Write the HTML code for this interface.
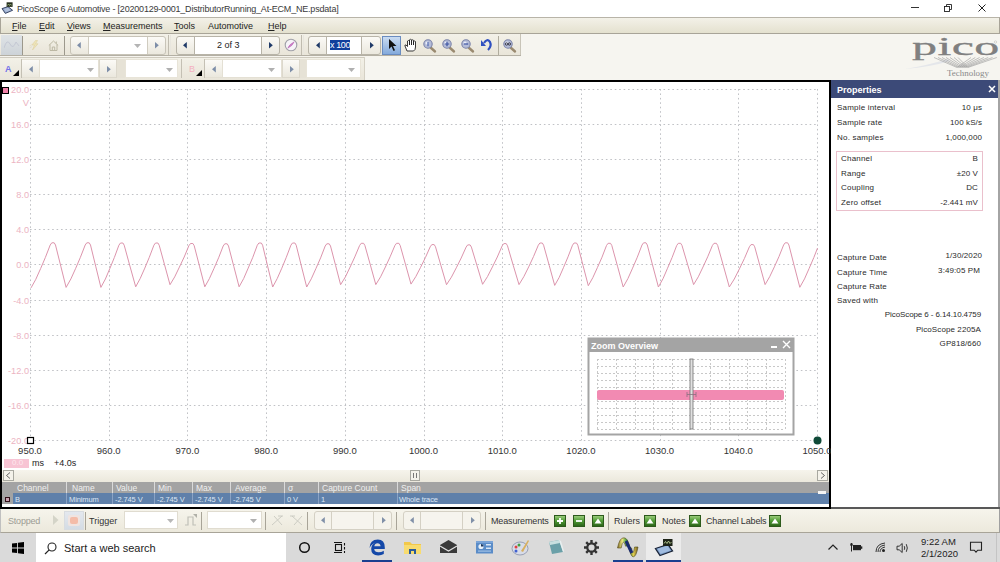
<!DOCTYPE html>
<html><head><meta charset="utf-8">
<style>
*{margin:0;padding:0;box-sizing:border-box}
html,body{width:1000px;height:562px;overflow:hidden;background:#fff;font-family:"Liberation Sans",sans-serif;position:relative}
.a{position:absolute}
.t{position:absolute;white-space:nowrap;line-height:1}
svg{display:block}
</style></head><body>
<div class="a" style="left:0px;top:0px;width:1000px;height:17px;background:#fff"></div>
<svg class="a" style="left:0px;top:0px;" width="16" height="16" viewBox="0 0 16 16"><path d="M2 8.6L8 6.6L12.6 10.3L5.3 13.4Z" fill="#90a4c8" stroke="#2e3a58" stroke-width="0.9" stroke-linejoin="round"/><path d="M4 9L8 7.8L10.8 10.2L5.8 12Z" fill="#b0c0dc"/><rect x="6.6" y="2.3" width="6" height="4.6" fill="#283020"/><path d="M7.5 5.5L8.5 4L9.5 5.5L10.5 4L11.5 5.5" stroke="#a0c080" stroke-width="0.7" fill="none"/></svg>
<div class="t" style="left:17px;top:5px;font-size:9px;color:#3a3a3a;letter-spacing:-0.2px">PicoScope 6 Automotive - [20200129-0001_DistributorRunning_At-ECM_NE.psdata]</div>
<div class="a" style="left:911px;top:7px;width:8px;height:1px;background:#333"></div>
<svg class="a" style="left:943px;top:4px;" width="9" height="8" viewBox="0 0 9 8"><rect x="1.5" y="2.5" width="5" height="5" fill="none" stroke="#222" stroke-width="0.9"/><path d="M3.5 2.5V0.5H8.5V5.5H6.5" fill="none" stroke="#222" stroke-width="0.9"/></svg>
<svg class="a" style="left:978px;top:4px;" width="8" height="8" viewBox="0 0 8 8"><path d="M0.5 0.5L7.5 7.5M7.5 0.5L0.5 7.5" stroke="#222" stroke-width="1"/></svg>
<div class="a" style="left:0px;top:17px;width:1000px;height:17px;background:linear-gradient(#f3f1e8,#e4e1cf);border-top:1px solid #b8b4a8;border-bottom:1px solid #a8a498;border-left:1px solid #a8a498;border-right:1px solid #a8a498"></div>
<div class="t" style="left:12px;top:22px;font-size:9px;color:#222;"><u style="text-decoration:underline;text-decoration-thickness:1px;text-underline-offset:1px">F</u>ile</div>
<div class="t" style="left:39px;top:22px;font-size:9px;color:#222;"><u style="text-decoration:underline;text-decoration-thickness:1px;text-underline-offset:1px">E</u>dit</div>
<div class="t" style="left:67px;top:22px;font-size:9px;color:#222;"><u style="text-decoration:underline;text-decoration-thickness:1px;text-underline-offset:1px">V</u>iews</div>
<div class="t" style="left:103px;top:22px;font-size:9px;color:#222;"><u style="text-decoration:underline;text-decoration-thickness:1px;text-underline-offset:1px">M</u>easurements</div>
<div class="t" style="left:174px;top:22px;font-size:9px;color:#222;"><u style="text-decoration:underline;text-decoration-thickness:1px;text-underline-offset:1px">T</u>ools</div>
<div class="t" style="left:208px;top:22px;font-size:9px;color:#222;">Automotive</div>
<div class="t" style="left:268px;top:22px;font-size:9px;color:#222;"><u style="text-decoration:underline;text-decoration-thickness:1px;text-underline-offset:1px">H</u>elp</div>
<div class="a" style="left:0px;top:34px;width:1000px;height:46px;background:#f6f5f0"></div>
<div class="a" style="left:0px;top:34px;width:521px;height:21px;background:linear-gradient(#f3f1e8,#e9e5d9);border-right:1px solid #c8c4b8"></div>
<div class="a" style="left:0px;top:57px;width:365px;height:23px;background:linear-gradient(#f3f1e8,#e9e5d9);border-right:1px solid #c8c4b8"></div>
<div class="a" style="left:1px;top:35px;width:21px;height:20px;background:linear-gradient(#dfe3e6,#cdd3d8)"></div>
<svg class="a" style="left:4px;top:40px;" width="16" height="10" viewBox="0 0 16 10"><path d="M0 8 Q3 -2 6 4 T12 2 L15 6" fill="none" stroke="#c4c8d4" stroke-width="1"/></svg>
<div class="a" style="left:22px;top:36px;width:1px;height:19px;background:#9c988c"></div>
<svg class="a" style="left:29px;top:40px;" width="11" height="11" viewBox="0 0 11 11"><path d="M6.5 0.5 L3 5 L5.5 5 L3.5 10 L9 3.8 L6.5 3.8 L8.5 0.5Z" fill="#eee4b8" stroke="#ddd0a0" stroke-width="0.6"/><path d="M0.5 6L3 4.5M0.5 8L3 6.5" stroke="#e0dcc8" stroke-width="0.8"/></svg>
<svg class="a" style="left:48px;top:40px;" width="11" height="11" viewBox="0 0 11 11"><path d="M0.8 5.5 L5.5 1 L10.2 5.5 M2 4.5 V10.5 H9 V4.5 M4.3 10.5V7H6.7V10.5 M8.3 1.5V3.5" fill="none" stroke="#bcb8a4" stroke-width="1"/></svg>
<div class="a" style="left:64px;top:36px;width:1px;height:19px;background:#9c988c"></div>
<div class="a" style="left:70px;top:36px;width:96px;height:19px;border:1px solid #c8c4b8;border-radius:3px;background:linear-gradient(#fbfaf6,#ebe8de)"></div>
<div class="a" style="left:88px;top:37px;width:60px;height:17px;background:#fff;border-left:1px solid #d0ccc0;border-right:1px solid #d0ccc0"></div>
<svg class="a" style="left:76.5px;top:42px;" width="4" height="6.5" viewBox="0 0 4 6.5"><path d="M3.8 0L0 3.25L3.8 6.5Z" fill="#7d8ea8"/></svg>
<svg class="a" style="left:155.0px;top:42px;" width="4" height="6.5" viewBox="0 0 4 6.5"><path d="M0 0L3.8 3.25L0 6.5Z" fill="#7d8ea8"/></svg>
<svg class="a" style="left:134.0px;top:43.5px;" width="7" height="4" viewBox="0 0 7 4"><path d="M0 0L7 0L3.5 4Z" fill="#b4b4b4"/></svg>
<div class="a" style="left:168px;top:35px;width:1px;height:21px;background:#c0bcb0"></div>
<div class="a" style="left:170px;top:35px;width:1px;height:21px;background:#e8e6de"></div>
<div class="a" style="left:176px;top:36px;width:104px;height:19px;border:1px solid #b8b4a8;border-radius:3px;background:linear-gradient(#fbfaf6,#ebe8de)"></div>
<div class="a" style="left:194px;top:37px;width:68px;height:17px;background:#fff;border-left:1px solid #b8b4a8;border-right:1px solid #b8b4a8"></div>
<svg class="a" style="left:182.5px;top:42px;" width="4" height="6.5" viewBox="0 0 4 6.5"><path d="M3.8 0L0 3.25L3.8 6.5Z" fill="#1f3a68"/></svg>
<svg class="a" style="left:268.5px;top:42px;" width="4" height="6.5" viewBox="0 0 4 6.5"><path d="M0 0L3.8 3.25L0 6.5Z" fill="#1f3a68"/></svg>
<div class="t" style="left:217px;top:41px;font-size:9px;color:#222;">2 of 3</div>
<svg class="a" style="left:284px;top:38px;" width="14" height="14" viewBox="0 0 14 14"><circle cx="7" cy="7" r="5.8" fill="#f6f4f8" stroke="#a0a0a8" stroke-width="1.1"/><path d="M10.2 3.8 Q9 7.5 3.8 10.2 Q5 6.5 10.2 3.8Z" fill="#d080c8" stroke="#b060b0" stroke-width="0.5"/></svg>
<div class="a" style="left:301px;top:35px;width:1px;height:21px;background:#c0bcb0"></div>
<div class="a" style="left:303px;top:35px;width:1px;height:21px;background:#e8e6de"></div>
<div class="a" style="left:308px;top:36px;width:73px;height:19px;border:1px solid #b8b4a8;border-radius:3px;background:linear-gradient(#fbfaf6,#ebe8de)"></div>
<div class="a" style="left:326px;top:37px;width:36px;height:17px;background:#fff;border-left:1px solid #b8b4a8;border-right:1px solid #b8b4a8"></div>
<svg class="a" style="left:316.0px;top:42px;" width="4" height="6.5" viewBox="0 0 4 6.5"><path d="M3.8 0L0 3.25L3.8 6.5Z" fill="#1f3a68"/></svg>
<svg class="a" style="left:370.0px;top:42px;" width="4" height="6.5" viewBox="0 0 4 6.5"><path d="M0 0L3.8 3.25L0 6.5Z" fill="#1f3a68"/></svg>
<div class="a" style="left:330px;top:40px;width:20px;height:10px;background:#10409c"></div>
<div class="t" style="left:330px;top:41px;font-size:9px;color:#fff;letter-spacing:-0.4px">x 100</div>
<div class="a" style="left:382px;top:36px;width:19px;height:19px;background:linear-gradient(#cadcf2,#84aadc);border:1px solid #6a8cc0"></div>
<svg class="a" style="left:388px;top:39px;" width="9" height="13" viewBox="0 0 9 13"><path d="M1 0 L1 10 L3.5 7.5 L5.5 12 L7 11.3 L5 7 L8.5 7 Z" fill="#111"/></svg>
<svg class="a" style="left:404px;top:38px;" width="14" height="14" viewBox="0 0 14 14"><path d="M3 13 L1 8 Q0.5 6.5 2 7 L3.5 8.5 V3 Q4.5 2 5.5 3 V7 V1.8 Q6.5 0.8 7.5 1.8 V7 V2.3 Q8.5 1.3 9.5 2.3 V7 V3.5 Q10.5 2.5 11.5 3.5 V9 Q11.5 12 9.5 13 Z" fill="#fff" stroke="#222" stroke-width="0.9"/></svg>
<svg class="a" style="left:0;top:0" width="1000" height="60"><path d="M430 47 L435 51.5" stroke="#9a8a70" stroke-width="2.4" stroke-linecap="round"/><circle cx="428" cy="44" r="4.2" fill="#b4bcd8" stroke="#7a82a8" stroke-width="1.1"/><circle cx="427" cy="43" r="1.6" fill="#e8ecf8"/><path d="M428 42V46.2" stroke="#5068b0" stroke-width="1.2"/><path d="M449 47 L454 51.5" stroke="#9a8a70" stroke-width="2.4" stroke-linecap="round"/><circle cx="447" cy="44" r="4.2" fill="#b4bcd8" stroke="#7a82a8" stroke-width="1.1"/><circle cx="446" cy="43" r="1.6" fill="#e8ecf8"/><path d="M444.8 44H449.2M447 41.8V46.2" stroke="#3850a0" stroke-width="1.2"/><path d="M468 47 L473 51.5" stroke="#9a8a70" stroke-width="2.4" stroke-linecap="round"/><circle cx="466" cy="44" r="4.2" fill="#b4bcd8" stroke="#7a82a8" stroke-width="1.1"/><circle cx="465" cy="43" r="1.6" fill="#e8ecf8"/><path d="M463.8 44H468.2" stroke="#3850a0" stroke-width="1.2"/><path d="M510 47 L515 51.5" stroke="#9a8a70" stroke-width="2.4" stroke-linecap="round"/><circle cx="508" cy="44" r="4.2" fill="#b4bcd8" stroke="#7a82a8" stroke-width="1.1"/><circle cx="507" cy="43" r="1.6" fill="#e8ecf8"/><circle cx="506.6" cy="44" r="1.2" fill="none" stroke="#303040" stroke-width="0.9"/><circle cx="509.4" cy="44" r="1.2" fill="none" stroke="#303040" stroke-width="0.9"/><path d="M484 43 Q487 38 490 42 Q492 46 488 50" fill="none" stroke="#3050c0" stroke-width="2.2"/><path d="M481 40 L486 46 L481 46Z" fill="#3050c0"/></svg>
<div class="a" style="left:498px;top:36px;width:1px;height:19px;background:#b0ac9e"></div>
<div class="a" style="left:0px;top:55px;width:521px;height:1px;background:#b4b0a4"></div>
<div class="a" style="left:0px;top:56px;width:521px;height:1px;background:#f6f4ee"></div>
<div class="a" style="left:0px;top:57px;width:365px;height:1px;background:#cfcbbf"></div>
<div class="t" style="left:5px;top:65px;font-size:9px;color:#7272e8;font-weight:bold">A</div>
<svg class="a" style="left:13px;top:70px;" width="6" height="6" viewBox="0 0 6 6"><path d="M6 0V6H0Z" fill="#000"/></svg>
<div class="a" style="left:21px;top:59px;width:1px;height:19px;background:#c4c0b4"></div>
<div class="a" style="left:22px;top:59px;width:17px;height:19px;background:linear-gradient(#fbfaf6,#ebe8de);border-top:1px solid #e4e0d4;border-bottom:1px solid #e4e0d4"></div>
<svg class="a" style="left:28.5px;top:66px;" width="4" height="6.5" viewBox="0 0 4 6.5"><path d="M3.8 0L0 3.25L3.8 6.5Z" fill="#7d8ea8"/></svg>
<div class="a" style="left:39px;top:59px;width:60px;height:19px;background:#fff;border:1px solid #e4e0d4"></div>
<svg class="a" style="left:86.5px;top:67.5px;" width="7" height="4" viewBox="0 0 7 4"><path d="M0 0L7 0L3.5 4Z" fill="#b0b0b0"/></svg>
<div class="a" style="left:99px;top:59px;width:18px;height:19px;background:linear-gradient(#fbfaf6,#ebe8de);border:1px solid #dcd8cc"></div>
<svg class="a" style="left:106.5px;top:66px;" width="4" height="6.5" viewBox="0 0 4 6.5"><path d="M0 0L3.8 3.25L0 6.5Z" fill="#7d8ea8"/></svg>
<div class="a" style="left:117px;top:59px;width:8px;height:19px;background:#e6e2d6"></div>
<div class="a" style="left:125px;top:59px;width:53px;height:19px;background:#fff;border:1px solid #e8e4d8"></div>
<svg class="a" style="left:165.5px;top:67.5px;" width="7" height="4" viewBox="0 0 7 4"><path d="M0 0L7 0L3.5 4Z" fill="#b0b0b0"/></svg>
<div class="a" style="left:181px;top:59px;width:1px;height:19px;background:#c4c0b4"></div>
<div class="t" style="left:189px;top:65px;font-size:9px;color:#f4b0c0;">B</div>
<svg class="a" style="left:196px;top:70px;" width="6" height="6" viewBox="0 0 6 6"><path d="M6 0V6H0Z" fill="#000"/></svg>
<div class="a" style="left:204px;top:59px;width:1px;height:19px;background:#c4c0b4"></div>
<div class="a" style="left:205px;top:59px;width:17px;height:19px;background:linear-gradient(#fbfaf6,#ebe8de);border-top:1px solid #e4e0d4;border-bottom:1px solid #e4e0d4"></div>
<svg class="a" style="left:211.5px;top:66px;" width="4" height="6.5" viewBox="0 0 4 6.5"><path d="M3.8 0L0 3.25L3.8 6.5Z" fill="#7d8ea8"/></svg>
<div class="a" style="left:222px;top:59px;width:60px;height:19px;background:#fff;border:1px solid #e4e0d4"></div>
<svg class="a" style="left:268.0px;top:67.5px;" width="7" height="4" viewBox="0 0 7 4"><path d="M0 0L7 0L3.5 4Z" fill="#b0b0b0"/></svg>
<div class="a" style="left:282px;top:59px;width:18px;height:19px;background:linear-gradient(#fbfaf6,#ebe8de);border:1px solid #dcd8cc"></div>
<svg class="a" style="left:289.5px;top:66px;" width="4" height="6.5" viewBox="0 0 4 6.5"><path d="M0 0L3.8 3.25L0 6.5Z" fill="#7d8ea8"/></svg>
<div class="a" style="left:300px;top:59px;width:6px;height:19px;background:#e6e2d6"></div>
<div class="a" style="left:306px;top:59px;width:55px;height:19px;background:#fff;border:1px solid #e8e4d8"></div>
<svg class="a" style="left:348.0px;top:67.5px;" width="7" height="4" viewBox="0 0 7 4"><path d="M0 0L7 0L3.5 4Z" fill="#b0b0b0"/></svg>
<div class="a" style="left:364px;top:57px;width:1px;height:23px;background:#d4d0c4"></div>
<svg class="a" style="left:0;top:0" width="1000" height="80"><g transform="translate(912,54.5) scale(2.0,1)"><text x="0" y="0" font-family="Liberation Serif" font-size="25" fill="#808080" stroke="#808080" stroke-width="0.3" letter-spacing="0.2">pico</text></g>
<circle cx="995.5" cy="42" r="1.2" fill="none" stroke="#aaa" stroke-width="0.4"/>
<path d="M905 69 Q925 66 948 59 L950 61 Q930 67 905 69Z" fill="#e4e6ea"/>
<g fill="none" stroke="#999" stroke-width="0.6" stroke-linejoin="round"><path d="M934.0 57.5 L957.0 67.5 L971.0 57.5"/><path d="M938.0 57.5 L958.8 67.5 L975.3 57.5"/><path d="M942.0 57.5 L960.6 67.5 L979.6 57.5"/><path d="M946.0 57.5 L962.4 67.5 L983.9 57.5"/><path d="M950.0 57.5 L964.2 67.5 L988.2 57.5"/><path d="M954.0 57.5 L966.0 67.5 L992.5 57.5"/><path d="M958.0 57.5 L967.8 67.5 L996.8 57.5"/></g>
<text x="947" y="75.5" font-family="Liberation Serif" font-size="8" fill="#8a8a8a" textLength="42" lengthAdjust="spacingAndGlyphs">Technology</text></svg>
<div class="a" style="left:0px;top:80px;width:831px;height:429px;background:#000"></div>
<div class="a" style="left:2px;top:82px;width:827px;height:425px;background:#fff"></div>
<svg class="a" style="left:0;top:0" width="1000" height="562"><g stroke="#c0c2c6" stroke-width="1" stroke-dasharray="1.6 2.83"><line x1="30.5" y1="89" x2="30.5" y2="440.5"/><line x1="109.5" y1="89" x2="109.5" y2="440.5"/><line x1="187.5" y1="89" x2="187.5" y2="440.5"/><line x1="266.5" y1="89" x2="266.5" y2="440.5"/><line x1="345.5" y1="89" x2="345.5" y2="440.5"/><line x1="424.5" y1="89" x2="424.5" y2="440.5"/><line x1="502.5" y1="89" x2="502.5" y2="440.5"/><line x1="581.5" y1="89" x2="581.5" y2="440.5"/><line x1="660.5" y1="89" x2="660.5" y2="440.5"/><line x1="738.5" y1="89" x2="738.5" y2="440.5"/><line x1="817.5" y1="89" x2="817.5" y2="440.5"/><line x1="30" y1="89.5" x2="818" y2="89.5"/><line x1="30" y1="124.5" x2="818" y2="124.5"/><line x1="30" y1="159.5" x2="818" y2="159.5"/><line x1="30" y1="194.5" x2="818" y2="194.5"/><line x1="30" y1="229.5" x2="818" y2="229.5"/><line x1="30" y1="264.5" x2="818" y2="264.5"/><line x1="30" y1="300.5" x2="818" y2="300.5"/><line x1="30" y1="335.5" x2="818" y2="335.5"/><line x1="30" y1="370.5" x2="818" y2="370.5"/><line x1="30" y1="405.5" x2="818" y2="405.5"/><line x1="30" y1="440.5" x2="818" y2="440.5"/></g>
<g font-family="Liberation Sans" font-size="9.2" fill="#ecb4c2" text-anchor="end"><text x="29" y="93">20.0</text><text x="29" y="128">16.0</text><text x="29" y="163">12.0</text><text x="29" y="198">8.0</text><text x="29" y="233">4.0</text><text x="29" y="268">0.0</text><text x="29" y="304">-4.0</text><text x="29" y="339">-8.0</text><text x="29" y="374">-12.0</text><text x="29" y="409">-16.0</text><text x="29" y="444">-20.0</text></g>
<text x="29" y="106" font-family="Liberation Sans" font-size="9.5" fill="#ecb4c2" text-anchor="end">V</text>
<g font-family="Liberation Sans" font-size="9.5" fill="#333" text-anchor="middle"><text x="30.0" y="453.5">950.0</text><text x="108.7" y="453.5">960.0</text><text x="187.4" y="453.5">970.0</text><text x="266.1" y="453.5">980.0</text><text x="344.8" y="453.5">990.0</text><text x="423.5" y="453.5">1000.0</text><text x="502.2" y="453.5">1010.0</text><text x="580.9" y="453.5">1020.0</text><text x="659.6" y="453.5">1030.0</text><text x="738.3" y="453.5">1040.0</text><text x="817.0" y="453.5">1050.0</text></g>
<polyline points="31.0,287.9 35.8,279.3 40.6,268.6 45.4,257.4 50.2,245.0 51.8,242.8 54.2,242.8 55.5,245.0 60.8,266.2 66.1,287.4 70.9,278.9 75.7,268.3 80.4,257.3 85.2,245.0 86.8,242.8 89.2,242.8 90.5,245.0 95.7,266.2 100.9,287.4 105.4,279.0 109.9,268.4 114.4,257.4 118.9,245.2 120.5,243.0 122.9,243.0 124.2,245.2 129.9,266.0 135.7,286.8 140.2,278.5 144.8,268.1 149.3,257.3 153.9,245.2 155.5,243.0 157.9,243.0 159.2,245.2 164.6,264.9 170.0,284.7 174.7,276.9 179.4,267.1 184.2,257.0 188.9,245.7 190.5,243.5 192.9,243.5 194.2,245.7 199.5,266.2 204.8,286.8 209.4,278.6 214.0,268.4 218.6,257.8 223.2,246.0 224.8,243.8 227.2,243.8 228.5,246.0 233.8,266.4 239.1,286.8 243.7,278.5 248.2,268.1 252.8,257.3 257.3,245.2 258.9,243.0 261.3,243.0 262.6,245.2 267.6,266.1 272.7,287.0 277.2,278.6 281.8,268.2 286.3,257.3 290.9,245.2 292.5,243.0 294.9,243.0 296.2,245.2 301.4,266.1 306.7,287.0 311.3,278.8 315.9,268.6 320.6,257.9 325.2,246.0 326.8,243.8 329.2,243.8 330.5,246.0 335.6,265.4 340.6,284.7 345.4,276.9 350.1,267.1 354.8,256.9 359.6,245.5 361.2,243.3 363.6,243.3 364.9,245.5 370.4,265.1 375.8,284.6 380.6,276.8 385.4,267.0 390.1,256.8 394.9,245.5 396.5,243.3 398.9,243.3 400.2,245.5 405.6,264.8 411.0,284.1 415.8,276.6 420.6,267.3 425.4,257.6 430.2,246.8 431.8,244.6 434.2,244.6 435.5,246.8 441.0,265.8 446.5,284.7 451.4,277.2 456.3,267.8 461.2,258.0 466.1,247.1 467.7,244.9 470.1,244.9 471.4,247.1 477.0,265.7 482.6,284.3 487.5,276.6 492.4,267.0 497.3,257.0 502.2,245.8 503.8,243.6 506.2,243.6 507.5,245.8 513.2,265.2 519.0,284.6 523.8,276.7 528.7,266.9 533.5,256.6 538.3,245.2 539.9,243.0 542.3,243.0 543.6,245.2 549.2,265.3 554.7,285.4 559.2,277.4 563.6,267.3 568.0,256.9 572.5,245.2 574.1,243.0 576.5,243.0 577.8,245.2 583.0,265.4 588.3,285.7 592.8,277.7 597.4,267.6 602.0,257.2 606.5,245.5 608.1,243.3 610.5,243.3 611.8,245.5 617.5,266.2 623.2,287.0 627.9,278.6 632.6,268.1 637.3,257.2 642.0,245.0 643.6,242.8 646.0,242.8 647.3,245.0 652.8,266.0 658.4,287.0 663.0,278.7 667.5,268.3 672.1,257.5 676.7,245.5 678.3,243.3 680.7,243.3 682.0,245.5 687.8,265.1 693.6,284.6 698.3,276.8 703.0,267.0 707.7,256.8 712.4,245.5 714.0,243.3 716.4,243.3 717.7,245.5 723.5,266.2 729.3,287.0 734.3,279.0 739.4,268.9 744.4,258.5 749.4,246.8 751.0,244.6 753.4,244.6 754.7,246.8 759.9,265.7 765.1,284.6 769.7,276.7 774.4,266.8 779.0,256.5 783.6,245.0 785.2,242.8 787.6,242.8 788.9,245.0 794.3,266.1 799.8,287.3 804.5,278.9 809.1,268.5 813.8,257.6 817.5,248.1" fill="none" stroke="#dc94ac" stroke-width="1"/>
<rect x="2.5" y="87.5" width="6" height="6" fill="#f080a8" stroke="#000"/>
<rect x="27.5" y="437.5" width="6" height="6" fill="#fff" stroke="#000" stroke-width="1.2"/>
<circle cx="817.5" cy="440.5" r="4" fill="#0f4a38"/></svg>
<div class="a" style="left:4px;top:459px;width:25px;height:9px;background:#f8c4d4"></div>
<div class="t" style="left:12px;top:459px;font-size:8px;color:#fde8ee;">0.0</div>
<div class="t" style="left:32px;top:459px;font-size:9px;color:#222;">ms</div>
<div class="t" style="left:54px;top:459px;font-size:9px;color:#222;">+4.0s</div>
<div class="a" style="left:2px;top:470px;width:827px;height:12px;background:linear-gradient(#f6f4ec,#ebe8dc)"></div>
<div class="a" style="left:3px;top:470px;width:11px;height:11px;background:#f4f2ea;border:1px solid #a8a8a0"></div>
<svg class="a" style="left:5px;top:472px;" width="7" height="7" viewBox="0 0 7 7"><path d="M5 0.5L1.5 3.5L5 6.5" fill="none" stroke="#555" stroke-width="0.9"/></svg>
<div class="a" style="left:410px;top:470px;width:10px;height:11px;background:#f4f2ea;border:1px solid #a8a8a0"></div>
<div class="a" style="left:413px;top:473px;width:1px;height:5px;background:#777"></div>
<div class="a" style="left:416px;top:473px;width:1px;height:5px;background:#777"></div>
<div class="a" style="left:817px;top:470px;width:11px;height:11px;background:#f4f2ea;border:1px solid #a8a8a0"></div>
<svg class="a" style="left:819px;top:472px;" width="7" height="7" viewBox="0 0 7 7"><path d="M2 0.5L5.5 3.5L2 6.5" fill="none" stroke="#555" stroke-width="0.9"/></svg>
<div class="a" style="left:2px;top:482px;width:827px;height:11px;background:#a3a3a3"></div>
<div class="a" style="left:2px;top:493px;width:827px;height:11px;background:#a3a3a3"></div>
<div class="a" style="left:13px;top:493px;width:816px;height:11px;background:#5f80aa"></div>
<div class="a" style="left:2px;top:504px;width:827px;height:3px;background:#fff"></div>
<div class="a" style="left:5px;top:497px;width:5px;height:5px;background:#c8a0b0;border:1px solid #301018"></div>
<div class="a" style="left:66px;top:482px;width:1px;height:11px;background:#dadada"></div>
<div class="a" style="left:66px;top:493px;width:1px;height:11px;background:#8aa2c4"></div>
<div class="a" style="left:112px;top:482px;width:1px;height:11px;background:#dadada"></div>
<div class="a" style="left:112px;top:493px;width:1px;height:11px;background:#8aa2c4"></div>
<div class="a" style="left:154px;top:482px;width:1px;height:11px;background:#dadada"></div>
<div class="a" style="left:154px;top:493px;width:1px;height:11px;background:#8aa2c4"></div>
<div class="a" style="left:192px;top:482px;width:1px;height:11px;background:#dadada"></div>
<div class="a" style="left:192px;top:493px;width:1px;height:11px;background:#8aa2c4"></div>
<div class="a" style="left:230px;top:482px;width:1px;height:11px;background:#dadada"></div>
<div class="a" style="left:230px;top:493px;width:1px;height:11px;background:#8aa2c4"></div>
<div class="a" style="left:284px;top:482px;width:1px;height:11px;background:#dadada"></div>
<div class="a" style="left:284px;top:493px;width:1px;height:11px;background:#8aa2c4"></div>
<div class="a" style="left:318px;top:482px;width:1px;height:11px;background:#dadada"></div>
<div class="a" style="left:318px;top:493px;width:1px;height:11px;background:#8aa2c4"></div>
<div class="a" style="left:397px;top:482px;width:1px;height:11px;background:#dadada"></div>
<div class="a" style="left:397px;top:493px;width:1px;height:11px;background:#8aa2c4"></div>
<div class="t" style="left:17px;top:484px;font-size:8.5px;color:#f0f0f0;letter-spacing:0px">Channel</div>
<div class="t" style="left:72px;top:484px;font-size:8.5px;color:#f0f0f0;letter-spacing:0px">Name</div>
<div class="t" style="left:116px;top:484px;font-size:8.5px;color:#f0f0f0;letter-spacing:0px">Value</div>
<div class="t" style="left:158px;top:484px;font-size:8.5px;color:#f0f0f0;letter-spacing:0px">Min</div>
<div class="t" style="left:196px;top:484px;font-size:8.5px;color:#f0f0f0;letter-spacing:0px">Max</div>
<div class="t" style="left:235px;top:484px;font-size:8.5px;color:#f0f0f0;letter-spacing:0px">Average</div>
<div class="t" style="left:288px;top:484px;font-size:8.5px;color:#f0f0f0;letter-spacing:0px">&#963;</div>
<div class="t" style="left:322px;top:484px;font-size:8.5px;color:#f0f0f0;letter-spacing:0px">Capture Count</div>
<div class="t" style="left:401px;top:484px;font-size:8.5px;color:#f0f0f0;letter-spacing:0px">Span</div>
<div class="t" style="left:15px;top:496px;font-size:7.5px;color:#dce6f4;letter-spacing:-0.1px">B</div>
<div class="t" style="left:69px;top:496px;font-size:7.5px;color:#dce6f4;letter-spacing:-0.1px">Minimum</div>
<div class="t" style="left:115px;top:496px;font-size:7.5px;color:#dce6f4;letter-spacing:-0.1px">-2.745 V</div>
<div class="t" style="left:157px;top:496px;font-size:7.5px;color:#dce6f4;letter-spacing:-0.1px">-2.745 V</div>
<div class="t" style="left:195px;top:496px;font-size:7.5px;color:#dce6f4;letter-spacing:-0.1px">-2.745 V</div>
<div class="t" style="left:233px;top:496px;font-size:7.5px;color:#dce6f4;letter-spacing:-0.1px">-2.745 V</div>
<div class="t" style="left:287px;top:496px;font-size:7.5px;color:#dce6f4;letter-spacing:-0.1px">0 V</div>
<div class="t" style="left:321px;top:496px;font-size:7.5px;color:#dce6f4;letter-spacing:-0.1px">1</div>
<div class="t" style="left:399px;top:496px;font-size:7.5px;color:#dce6f4;letter-spacing:-0.1px">Whole trace</div>
<div class="a" style="left:818px;top:491px;width:8px;height:3px;background:#f4f4f4"></div>
<div class="a" style="left:831px;top:80px;width:169px;height:429px;background:#fff"></div>
<div class="a" style="left:998px;top:80px;width:2px;height:429px;background:#a4a4a4"></div>
<div class="a" style="left:831px;top:507px;width:169px;height:2px;background:#585858"></div>
<div class="a" style="left:831px;top:80px;width:167px;height:18px;background:#3c4a78"></div>
<div class="t" style="left:837px;top:86px;font-size:9px;color:#fff;font-weight:bold">Properties</div>
<svg class="a" style="left:988px;top:85px;" width="8" height="8" viewBox="0 0 8 8"><path d="M1 1L7 7M7 1L1 7" stroke="#fff" stroke-width="1.5"/></svg>
<div class="t" style="left:837px;top:104px;font-size:8px;color:#2a2a2a;letter-spacing:0.2px">Sample interval</div>
<div class="t" style="left:982px;top:104px;font-size:8px;color:#2a2a2a;transform:translateX(-100%);letter-spacing:0.1px">10 &#956;s</div>
<div class="t" style="left:837px;top:119px;font-size:8px;color:#2a2a2a;letter-spacing:0.2px">Sample rate</div>
<div class="t" style="left:982px;top:119px;font-size:8px;color:#2a2a2a;transform:translateX(-100%);letter-spacing:0.1px">100 kS/s</div>
<div class="t" style="left:837px;top:134px;font-size:8px;color:#2a2a2a;letter-spacing:0.2px">No. samples</div>
<div class="t" style="left:982px;top:134px;font-size:8px;color:#2a2a2a;transform:translateX(-100%);letter-spacing:0.1px">1,000,000</div>
<div class="a" style="left:836px;top:151px;width:147px;height:60px;border:1px solid #eac0cc"></div>
<div class="t" style="left:841px;top:155px;font-size:8px;color:#2a2a2a;letter-spacing:0.2px">Channel</div>
<div class="t" style="left:978px;top:155px;font-size:8px;color:#2a2a2a;transform:translateX(-100%);letter-spacing:0.1px">B</div>
<div class="t" style="left:841px;top:170px;font-size:8px;color:#2a2a2a;letter-spacing:0.2px">Range</div>
<div class="t" style="left:978px;top:170px;font-size:8px;color:#2a2a2a;transform:translateX(-100%);letter-spacing:0.1px">&#177;20 V</div>
<div class="t" style="left:841px;top:184px;font-size:8px;color:#2a2a2a;letter-spacing:0.2px">Coupling</div>
<div class="t" style="left:978px;top:184px;font-size:8px;color:#2a2a2a;transform:translateX(-100%);letter-spacing:0.1px">DC</div>
<div class="t" style="left:841px;top:199px;font-size:8px;color:#2a2a2a;letter-spacing:0.2px">Zero offset</div>
<div class="t" style="left:978px;top:199px;font-size:8px;color:#2a2a2a;transform:translateX(-100%);letter-spacing:0.1px">-2.441 mV</div>
<div class="t" style="left:837px;top:254px;font-size:8px;color:#2a2a2a;letter-spacing:0.2px">Capture Date</div>
<div class="t" style="left:982px;top:254px;font-size:8px;color:#2a2a2a;transform:translateX(-100%);letter-spacing:0.1px"></div>
<div class="t" style="left:837px;top:252px;font-size:8px;color:#2a2a2a;letter-spacing:0.2px"></div>
<div class="t" style="left:982px;top:252px;font-size:8px;color:#2a2a2a;transform:translateX(-100%);letter-spacing:0.1px">1/30/2020</div>
<div class="t" style="left:837px;top:269px;font-size:8px;color:#2a2a2a;letter-spacing:0.2px">Capture Time</div>
<div class="t" style="left:982px;top:269px;font-size:8px;color:#2a2a2a;transform:translateX(-100%);letter-spacing:0.1px"></div>
<div class="t" style="left:837px;top:267px;font-size:8px;color:#2a2a2a;letter-spacing:0.2px"></div>
<div class="t" style="left:980px;top:267px;font-size:8px;color:#2a2a2a;transform:translateX(-100%);letter-spacing:0.1px">3:49:05 PM</div>
<div class="t" style="left:837px;top:283px;font-size:8px;color:#2a2a2a;letter-spacing:0.2px">Capture Rate</div>
<div class="t" style="left:982px;top:283px;font-size:8px;color:#2a2a2a;transform:translateX(-100%);letter-spacing:0.1px"></div>
<div class="t" style="left:837px;top:297px;font-size:8px;color:#2a2a2a;letter-spacing:0.2px">Saved with</div>
<div class="t" style="left:982px;top:297px;font-size:8px;color:#2a2a2a;transform:translateX(-100%);letter-spacing:0.1px"></div>
<div class="t" style="left:981px;top:311px;font-size:8px;color:#2a2a2a;transform:translateX(-100%);letter-spacing:-0.1px">PicoScope 6 - 6.14.10.4759</div>
<div class="t" style="left:837px;top:326px;font-size:8px;color:#2a2a2a;letter-spacing:0.2px"></div>
<div class="t" style="left:981px;top:326px;font-size:8px;color:#2a2a2a;transform:translateX(-100%);letter-spacing:0.1px">PicoScope 2205A</div>
<div class="t" style="left:837px;top:340px;font-size:8px;color:#2a2a2a;letter-spacing:0.2px"></div>
<div class="t" style="left:981px;top:340px;font-size:8px;color:#2a2a2a;transform:translateX(-100%);letter-spacing:0.1px">GP818/660</div>
<svg class="a" style="left:0;top:0" width="1000" height="562"><rect x="588.5" y="338.5" width="205" height="96" fill="#fff" stroke="#a4a4a4" stroke-width="2"/><rect x="588" y="338" width="206" height="14" fill="#a4a4a4"/><text x="591" y="349" font-family="Liberation Sans" font-size="9" font-weight="bold" fill="#fff">Zoom Overview</text><rect x="771" y="346" width="6" height="2" fill="#fff"/><path d="M783 341L790 348M790 341L783 348" stroke="#fff" stroke-width="1.4"/><g stroke="#c8c8c8" stroke-dasharray="2 2" shape-rendering="crispEdges"><line x1="597.5" y1="359" x2="597.5" y2="429"/><line x1="616.5" y1="359" x2="616.5" y2="429"/><line x1="635.5" y1="359" x2="635.5" y2="429"/><line x1="653.5" y1="359" x2="653.5" y2="429"/><line x1="672.5" y1="359" x2="672.5" y2="429"/><line x1="691.5" y1="359" x2="691.5" y2="429"/><line x1="710.5" y1="359" x2="710.5" y2="429"/><line x1="729.5" y1="359" x2="729.5" y2="429"/><line x1="747.5" y1="359" x2="747.5" y2="429"/><line x1="766.5" y1="359" x2="766.5" y2="429"/><line x1="785.5" y1="359" x2="785.5" y2="429"/><line x1="597" y1="359.5" x2="785" y2="359.5"/><line x1="597" y1="366.5" x2="785" y2="366.5"/><line x1="597" y1="373.5" x2="785" y2="373.5"/><line x1="597" y1="380.5" x2="785" y2="380.5"/><line x1="597" y1="387.5" x2="785" y2="387.5"/><line x1="597" y1="394.5" x2="785" y2="394.5"/><line x1="597" y1="401.5" x2="785" y2="401.5"/><line x1="597" y1="408.5" x2="785" y2="408.5"/><line x1="597" y1="415.5" x2="785" y2="415.5"/><line x1="597" y1="422.5" x2="785" y2="422.5"/><line x1="597" y1="429.5" x2="785" y2="429.5"/></g><rect x="597" y="390" width="187" height="10" rx="2" fill="#f28ab2"/><rect x="690" y="359" width="3" height="70" fill="#e0e0e0" stroke="#707070" stroke-width="0.8"/><path d="M687 394.5H696M687 392V397M696 392V397" stroke="#8a7080" stroke-width="0.8"/></svg>
<div class="a" style="left:0px;top:509px;width:1000px;height:24px;background:linear-gradient(#f6f4ec,#ece9dc);border-bottom:1px solid #a8a498;border-right:1px solid #a0a0a0;border-left:1px solid #c0c0c0"></div>
<div class="t" style="left:8px;top:517px;font-size:9px;color:#9c9c94;letter-spacing:-0.2px">Stopped</div>
<svg class="a" style="left:53px;top:515px;" width="6" height="10" viewBox="0 0 6 10"><path d="M0 0L5.5 5L0 10Z" fill="#d4d4c8"/></svg>
<div class="a" style="left:64px;top:511px;width:20px;height:19px;background:linear-gradient(#e4e8ee,#d4dce4);border:1px solid #d8dce0"></div>
<div class="a" style="left:68px;top:515px;width:12px;height:11px;background:#f0e4e0;border-radius:2px"></div>
<div class="a" style="left:70px;top:517px;width:8px;height:7px;background:#f4bca8;border-radius:2px"></div>
<div class="a" style="left:85px;top:512px;width:1px;height:18px;background:#a8a498"></div>
<div class="t" style="left:89px;top:517px;font-size:9px;color:#333;">Trigger</div>
<div class="a" style="left:124px;top:511px;width:54px;height:18px;background:#fff;border:1px solid #e0dcd0"></div>
<svg class="a" style="left:166.5px;top:519.0px;" width="7" height="4" viewBox="0 0 7 4"><path d="M0 0L7 0L3.5 4Z" fill="#b8b8b8"/></svg>
<svg class="a" style="left:184px;top:513px;" width="14" height="14" viewBox="0 0 14 14"><path d="M1 12H4V4H9V12H12" fill="none" stroke="#c0c0b8" stroke-width="1.2"/><path d="M9 1H13V5Z" fill="#b0b0a8"/></svg>
<div class="a" style="left:201px;top:512px;width:1px;height:18px;background:#a8a498"></div>
<div class="a" style="left:207px;top:511px;width:55px;height:18px;background:#fff;border:1px solid #e0dcd0"></div>
<svg class="a" style="left:249.5px;top:519.0px;" width="7" height="4" viewBox="0 0 7 4"><path d="M0 0L7 0L3.5 4Z" fill="#b0b0b0"/></svg>
<div class="a" style="left:265px;top:512px;width:1px;height:18px;background:#a8a498"></div>
<svg class="a" style="left:271px;top:514px;" width="34" height="13" viewBox="0 0 34 13"><path d="M1 11L11 2M3 2L11 11M7 2H12" stroke="#c8c8c0" stroke-width="0.9" fill="none"/><path d="M21 2L31 11M23 11L31 2M19 2H24" stroke="#c8c8c0" stroke-width="0.9" fill="none"/></svg>
<div class="a" style="left:307px;top:512px;width:1px;height:18px;background:#a8a498"></div>
<div class="a" style="left:314px;top:511px;width:78px;height:19px;border:1px solid #d4d0c4;border-radius:3px;background:#f5f3ec"></div>
<div class="a" style="left:331px;top:512px;width:43px;height:17px;border-left:1px solid #d4d0c4;border-right:1px solid #d4d0c4;background:#f6f4ee"></div>
<svg class="a" style="left:320.5px;top:517px;" width="4" height="6.5" viewBox="0 0 4 6.5"><path d="M3.8 0L0 3.25L3.8 6.5Z" fill="#8090a8"/></svg>
<svg class="a" style="left:381.5px;top:517px;" width="4" height="6.5" viewBox="0 0 4 6.5"><path d="M0 0L3.8 3.25L0 6.5Z" fill="#8090a8"/></svg>
<div class="a" style="left:396px;top:512px;width:1px;height:18px;background:#a8a498"></div>
<div class="a" style="left:403px;top:511px;width:78px;height:19px;border:1px solid #d4d0c4;border-radius:3px;background:#f5f3ec"></div>
<div class="a" style="left:420px;top:512px;width:43px;height:17px;border-left:1px solid #d4d0c4;border-right:1px solid #d4d0c4;background:#f6f4ee"></div>
<svg class="a" style="left:409.5px;top:517px;" width="4" height="6.5" viewBox="0 0 4 6.5"><path d="M3.8 0L0 3.25L3.8 6.5Z" fill="#8090a8"/></svg>
<svg class="a" style="left:470.5px;top:517px;" width="4" height="6.5" viewBox="0 0 4 6.5"><path d="M0 0L3.8 3.25L0 6.5Z" fill="#8090a8"/></svg>
<div class="a" style="left:485px;top:512px;width:1px;height:18px;background:#a8a498"></div>
<div class="t" style="left:491px;top:517px;font-size:9px;color:#333;letter-spacing:-0.15px">Measurements</div>
<svg class="a" style="left:0;top:0" width="1000" height="562"><defs><linearGradient id="gg" x1="0" y1="0" x2="0" y2="1"><stop offset="0" stop-color="#a0d080"/><stop offset="0.5" stop-color="#4e9a34"/><stop offset="1" stop-color="#2a6018"/></linearGradient></defs><rect x="554.5" y="515.5" width="11" height="11" fill="url(#gg)" stroke="#2d5a1c" stroke-width="1"/><path d="M557 521H563M560 518V524" stroke="#fff" stroke-width="1.8"/><rect x="573.5" y="515.5" width="11" height="11" fill="url(#gg)" stroke="#2d5a1c" stroke-width="1"/><path d="M576 521H582" stroke="#fff" stroke-width="1.8"/><rect x="592.5" y="515.5" width="11" height="11" fill="url(#gg)" stroke="#2d5a1c" stroke-width="1"/><path d="M594.5 523.5L598 518.5L601.5 523.5Z" fill="#fff"/><rect x="644.5" y="515.5" width="11" height="11" fill="url(#gg)" stroke="#2d5a1c" stroke-width="1"/><path d="M646.5 523.5L650 518.5L653.5 523.5Z" fill="#fff"/><rect x="689.5" y="515.5" width="11" height="11" fill="url(#gg)" stroke="#2d5a1c" stroke-width="1"/><path d="M691.5 523.5L695 518.5L698.5 523.5Z" fill="#fff"/><rect x="769.5" y="515.5" width="11" height="11" fill="url(#gg)" stroke="#2d5a1c" stroke-width="1"/><path d="M771.5 523.5L775 518.5L778.5 523.5Z" fill="#fff"/></svg>
<div class="a" style="left:608px;top:512px;width:1px;height:18px;background:#a8a498"></div>
<div class="t" style="left:614px;top:517px;font-size:9px;color:#333;">Rulers</div>
<div class="t" style="left:662px;top:517px;font-size:9px;color:#333;">Notes</div>
<div class="t" style="left:706px;top:517px;font-size:9px;color:#333;letter-spacing:-0.15px">Channel Labels</div>
<div class="a" style="left:0px;top:533px;width:1000px;height:29px;background:#dadada"></div>
<div class="a" style="left:996px;top:533px;width:1px;height:29px;background:#c4c4c4"></div>
<div class="a" style="left:36px;top:533px;width:250px;height:29px;background:#fff"></div>
<svg class="a" style="left:12px;top:542px;" width="12" height="12" viewBox="0 0 12 12"><path d="M0 1.6L5 0.9V5.5H0ZM5.9 0.8L12 0V5.5H5.9ZM0 6.4H5V11.1L0 10.4ZM5.9 6.4H12V12L5.9 11.2Z" fill="#000"/></svg>
<svg class="a" style="left:44px;top:542px;" width="13" height="13" viewBox="0 0 13 13"><circle cx="8" cy="5" r="4" fill="none" stroke="#222" stroke-width="1.1"/><path d="M5.2 7.8L1 12" stroke="#222" stroke-width="1.2"/></svg>
<div class="t" style="left:64px;top:543px;font-size:11px;color:#222;">Start a web search</div>
<svg class="a" style="left:298px;top:541px;" width="13" height="13" viewBox="0 0 13 13"><circle cx="6.5" cy="6.5" r="4.8" fill="none" stroke="#111" stroke-width="1.5"/></svg>
<svg class="a" style="left:333px;top:541px;" width="13" height="13" viewBox="0 0 13 13"><rect x="2.5" y="3.5" width="6" height="6" fill="none" stroke="#111" stroke-width="1.1"/><path d="M1 1.5H9M1 11.5H9M11.5 2V4.5M11.5 6V8.5M11.5 10V12" stroke="#111" stroke-width="1.1"/></svg>
<svg class="a" style="left:368px;top:538px;" width="18" height="18" viewBox="0 0 18 18"><path fill-rule="evenodd" d="M1.5 10 Q1.8 1.5 9.8 1.5 Q16.8 1.5 16.8 9.5 V11 H6.2 Q6.6 14.3 10.6 14.3 Q13.3 14.3 15.8 12.8 V16 Q13.4 17.4 10.2 17.4 Q3.2 17.4 3.2 11 Q3.2 6.2 7.8 4.4 Q3.8 5.6 1.5 10Z M6.3 8.3 H12.6 Q12.3 5.2 9.4 5.2 Q6.8 5.2 6.3 8.3Z" fill="#1448a8"/></svg>
<div class="a" style="left:362px;top:560px;width:30px;height:2px;background:#1a3f90"></div>
<svg class="a" style="left:403px;top:540px;" width="19" height="15" viewBox="0 0 19 15"><path d="M1 2H7L9 4H18V14H1Z" fill="#f2c84a"/><path d="M1 5H18V14H1Z" fill="#f8dc70"/><rect x="6" y="9" width="7" height="5" fill="#2a5a9a"/><rect x="8" y="11" width="3" height="3" fill="#f8dc70"/></svg>
<svg class="a" style="left:439px;top:539px;" width="19" height="15" viewBox="0 0 19 15"><path d="M1 6L9.5 1L18 6V14H1Z" fill="#3a3a3a"/><path d="M1 7L9.5 12L18 7" fill="none" stroke="#e0e0e0" stroke-width="1.3"/></svg>
<svg class="a" style="left:476px;top:541px;" width="17" height="13" viewBox="0 0 17 13"><rect x="0" y="0" width="17" height="12.5" fill="#5a8cc8"/><rect x="0" y="0" width="17" height="2" fill="#7aa4d8"/><circle cx="5" cy="5.5" r="2.6" fill="#e8f0f8"/><path d="M5 5.5V2.9A2.6 2.6 0 0 1 7.6 5.5Z" fill="#203a60"/><rect x="10" y="3" width="5" height="1.5" fill="#d8e6f6"/><rect x="10" y="6.5" width="5" height="1.5" fill="#d8e6f6"/><rect x="2" y="9.5" width="13" height="1.2" fill="#a0c0e4"/></svg>
<svg class="a" style="left:511px;top:538px;" width="19" height="18" viewBox="0 0 19 18"><ellipse cx="9" cy="10.5" rx="8" ry="6.5" fill="#d8dce8" stroke="#8890a8" stroke-width="0.8"/><circle cx="5" cy="9" r="1.5" fill="#e04040"/><circle cx="8" cy="7" r="1.5" fill="#40a040"/><circle cx="5" cy="13" r="1.5" fill="#4060d0"/><path d="M10 13L17 2L18 3L12 14Z" fill="#d8b060"/></svg>
<svg class="a" style="left:547px;top:539px;" width="18" height="16" viewBox="0 0 18 16"><path d="M2 3L12 1L16 13L5 15Z" fill="#6aa0a8"/><path d="M2 3L12 1L13 4L3 6Z" fill="#c8e0e0"/><path d="M12 1L16 13L17 12L14 2Z" fill="#e8f0f0"/></svg>
<svg class="a" style="left:584px;top:540px;" width="15" height="15" viewBox="0 0 15 15"><circle cx="7.5" cy="7.5" r="4.2" fill="none" stroke="#333" stroke-width="2.2"/><g stroke="#333" stroke-width="2.4"><path d="M7.5 0V3M7.5 12V15M0 7.5H3M12 7.5H15M2.2 2.2L4.3 4.3M10.7 10.7L12.8 12.8M2.2 12.8L4.3 10.7M10.7 4.3L12.8 2.2"/></g></svg>
<svg class="a" style="left:617px;top:537px;" width="22" height="21" viewBox="0 0 22 21"><defs><linearGradient id="wg" x1="0" y1="0" x2="1" y2="0"><stop offset="0" stop-color="#7a6a28"/><stop offset="0.4" stop-color="#f0e880"/><stop offset="0.75" stop-color="#3a9a40"/><stop offset="1" stop-color="#2a5a20"/></linearGradient><linearGradient id="wg2" x1="0" y1="0" x2="1" y2="0"><stop offset="0" stop-color="#2a6a28"/><stop offset="0.5" stop-color="#e0d050"/><stop offset="1" stop-color="#7a5a20"/></linearGradient></defs><path d="M0.5 11 Q2.5 0.5 7 0.8 Q10.5 1 12.5 8.5 L8.6 9.2 Q7.6 5.2 6.5 5.2 Q5 5.2 4.2 11Z" fill="url(#wg)" stroke="#5a4a18" stroke-width="0.6"/><path d="M11.8 10 Q13.8 19.8 16.2 19.8 Q19.2 19.8 21 10 L17.6 10 Q16.8 15.5 16 15.5 Q15 15.5 14.6 11Z" fill="url(#wg2)" stroke="#4a4a18" stroke-width="0.6"/><path d="M9 4 L14.8 16" stroke="#1a2a70" stroke-width="3"/></svg>
<div class="a" style="left:613px;top:560px;width:30px;height:2px;background:#1a3f90"></div>
<div class="a" style="left:646px;top:533px;width:35px;height:29px;background:#ebebeb"></div>
<div class="a" style="left:646px;top:560px;width:35px;height:2px;background:#1a3f90"></div>
<svg class="a" style="left:654px;top:538px;" width="20" height="19" viewBox="0 0 20 19"><path d="M1.5 10.5L14 6.5L18.5 13L6 17.5Z" fill="#7a9cc8" stroke="#1a2438" stroke-width="1.3"/><path d="M3.5 10.8L13.5 7.8L16.5 12.5L6.5 15.8Z" fill="#a0bce0"/><rect x="9" y="1" width="9.5" height="7" fill="#1e2418"/><path d="M10 5.5L11.5 3.5L13 5.5L14.5 3L16 5.5L17.5 4" stroke="#c8e0a0" stroke-width="0.8" fill="none"/></svg>
<svg class="a" style="left:828px;top:544px;" width="10" height="6" viewBox="0 0 10 6"><path d="M0.5 5.5L5 1L9.5 5.5" fill="none" stroke="#222" stroke-width="1.2"/></svg>
<svg class="a" style="left:849px;top:542px;" width="14" height="10" viewBox="0 0 14 10"><path d="M2.5 1V9.5" stroke="#222" stroke-width="1"/><rect x="1.3" y="1.5" width="2.4" height="2.2" fill="#222"/><rect x="4" y="3" width="8" height="5.2" fill="#222"/><rect x="12" y="4.4" width="1.3" height="2.4" fill="#222"/></svg>
<svg class="a" style="left:875px;top:542px;" width="11" height="11" viewBox="0 0 11 11"><path d="M1 10Q1 2 10 1M3 10Q3 4 10 3M5 10Q5 6 10 5" fill="none" stroke="#333" stroke-width="1"/><circle cx="8.5" cy="8.5" r="1.5" fill="#222"/></svg>
<svg class="a" style="left:896px;top:542px;" width="13" height="12" viewBox="0 0 13 12"><path d="M1 4.2H3.2L6.2 1.5V10.5L3.2 7.8H1Z" fill="none" stroke="#222" stroke-width="0.9"/><path d="M8.3 4.2Q9.2 6 8.3 7.8M10.3 2.2Q12.3 6 10.3 9.8" fill="none" stroke="#222" stroke-width="0.9"/></svg>
<div class="t" style="left:921px;top:537px;font-size:9.5px;color:#222;">9:22 AM</div>
<div class="t" style="left:921px;top:549px;font-size:9.5px;color:#222;">2/1/2020</div>
<svg class="a" style="left:969px;top:541px;" width="14" height="13" viewBox="0 0 14 13"><path d="M1.5 1.2H12.5V9.2H8.7L7 11.2L5.3 9.2H1.5Z" fill="none" stroke="#222" stroke-width="1.1"/></svg>

</body></html>
